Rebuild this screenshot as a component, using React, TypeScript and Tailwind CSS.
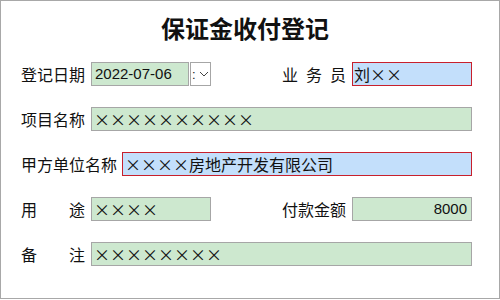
import React from "react";

const CJK = { fontFamily: '"Noto Sans CJK SC", "Noto Sans", sans-serif' };

function Label({ children, w = 64 }: { children: React.ReactNode; w?: number }) {
  return (
    <div
      className={`flex justify-between text-[16px] leading-[24px] text-[#111] ${w === 96 ? "w-[96px]" : "w-[64px]"}`}
    >
      {children}
    </div>
  );
}

export default function App() {
  const green = "h-[24px] border border-[#a6a6a6] bg-[#cde8cf] flex items-center text-[#111] overflow-hidden box-border";
  const blue = "h-[24px] border border-[#c8202c] bg-[#c3dffb] flex items-center text-[#111] overflow-hidden box-border";
  return (
    <div
      className="w-[500px] h-[299px] border border-[#a8a8a8] box-border bg-white flex flex-col"
      style={CJK}
    >
      <div className="mt-[12px] h-[30px] leading-[30px] text-[24px] font-bold text-center pr-[10px] text-[#111]">
        保证金收付登记
      </div>
      <div className="mt-[19px] flex flex-col gap-[21px] pl-[20px]">
        {/* Row 1 */}
        <div className="flex items-center h-[24px]">
          <Label>
            <span>登记日期</span>
          </Label>
          <div className={`${green} ml-[6px] w-[98px] pl-[3px]`}>
            <span className="text-[15px]" style={{ fontFamily: '"Liberation Sans", Arial, sans-serif' }}>
              2022-07-06
            </span>
          </div>
          <div className="ml-[1px] w-[21px] h-[24px] border border-[#a6a6a6] bg-white flex items-center box-border">
            <span className="text-[13px] leading-none ml-[1px] text-[#222]" style={{ fontFamily: '"Liberation Sans", sans-serif' }}>:</span>
            <svg width="10" height="6" viewBox="0 0 10 6" className="ml-[3px]">
              <path d="M1 1 L5 5 L9 1" fill="none" stroke="#444" strokeWidth="1" />
            </svg>
          </div>
          <div className="ml-[71px]">
            <Label>
              <span>业</span>
              <span>务</span>
              <span>员</span>
            </Label>
          </div>
          <div className={`${blue} ml-[6px] w-[120px] pl-[1px] text-[16px]`}>刘××</div>
        </div>
        {/* Row 2 */}
        <div className="flex items-center h-[24px]">
          <Label>
            <span>项目名称</span>
          </Label>
          <div className={`${green} ml-[6px] w-[381px] pl-[2px] text-[16px]`}>××××××××××</div>
        </div>
        {/* Row 3 */}
        <div className="flex items-center h-[24px]">
          <Label w={96}>
            <span>甲方单位名称</span>
          </Label>
          <div className={`${blue} ml-[5px] w-[350px] pl-[2px] text-[16px]`}>××××房地产开发有限公司</div>
        </div>
        {/* Row 4 */}
        <div className="flex items-center h-[24px]">
          <Label>
            <span>用</span>
            <span>途</span>
          </Label>
          <div className={`${green} ml-[6px] w-[120px] pl-[2px] text-[16px]`}>××××</div>
          <div className="ml-[71px]">
            <Label>
              <span>付款金额</span>
            </Label>
          </div>
          <div className={`${green} ml-[6px] w-[120px] justify-end pr-[4px]`}>
            <span className="text-[15px]" style={{ fontFamily: '"Liberation Sans", Arial, sans-serif' }}>
              8000
            </span>
          </div>
        </div>
        {/* Row 5 */}
        <div className="flex items-center h-[24px]">
          <Label>
            <span>备</span>
            <span>注</span>
          </Label>
          <div className={`${green} ml-[6px] w-[381px] pl-[2px] text-[16px]`}>××××××××</div>
        </div>
      </div>
    </div>
  );
}
